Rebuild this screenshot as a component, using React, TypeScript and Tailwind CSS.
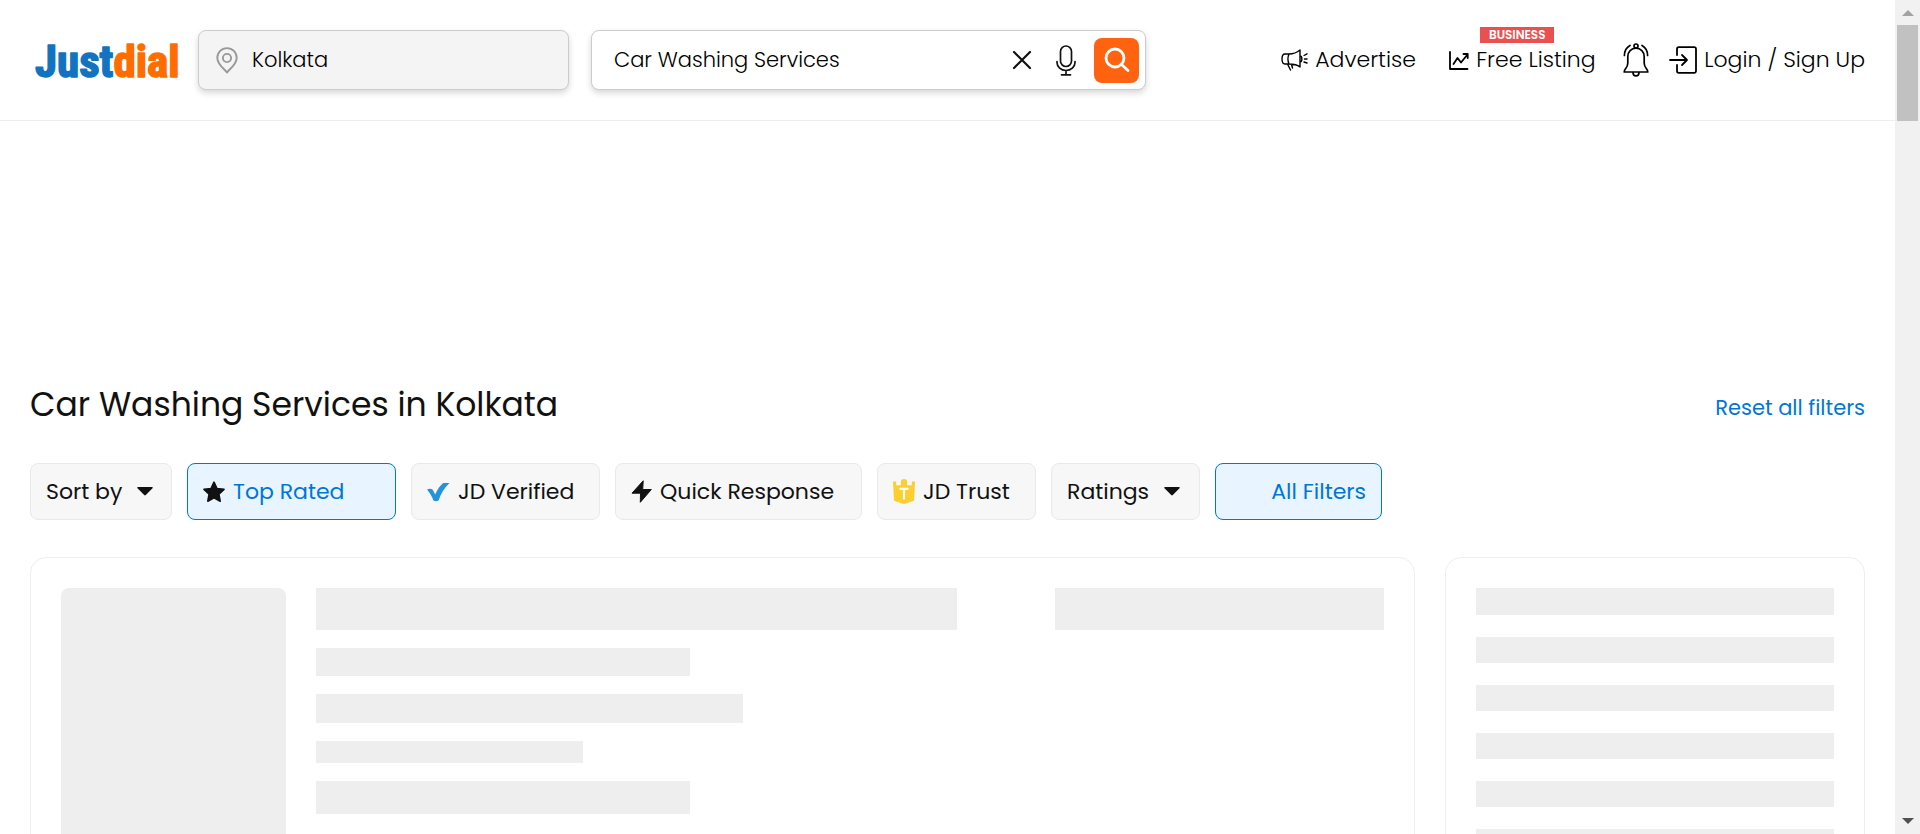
import React from "react";

const stroke = {
  fill: "none",
  stroke: "currentColor",
  strokeLinecap: "round" as const,
  strokeLinejoin: "round" as const,
};

function Logo() {
  return (
    <svg width="152" height="60" viewBox="0 0 152 60" className="font-['Roboto_Condensed','Liberation_Sans_Narrow',sans-serif] text-[45px] font-bold" strokeWidth="1.500" strokeLinejoin="round" aria-hidden="true">
      <text x="5" y="47" fill="#1274c0" stroke="#1274c0">
        Just<tspan fill="#ff6c00" stroke="#ff6c00">dial</tspan>
      </text>
    </svg>
  );
}

function PinIcon() {
  return (
    <svg width="22" height="27" viewBox="0 0 22 27" {...stroke} strokeWidth="1.900" className="shrink-0 text-[#999]" aria-hidden="true">
      <path d="M11 25.500C9.500 22.800 1.300 18 1.300 10.800a9.700 9.700 0 0 1 19.400 0C20.700 18 12.500 22.800 11 25.500Z" />
      <circle cx="11" cy="11" r="4.100" />
    </svg>
  );
}

function CrossIcon() {
  return (
    <svg width="20" height="20" viewBox="0 0 20 20" {...stroke} strokeWidth="2.200" aria-hidden="true">
      <path d="M2 2 18 18M18 2 2 18" />
    </svg>
  );
}

function MicIcon() {
  return (
    <svg width="20" height="31" viewBox="0 0 20 31" {...stroke} strokeWidth="1.700" aria-hidden="true">
      <rect x="4.500" y="1" width="11" height="20.500" rx="5.500" />
      <path d="M1 16.500v1a9 8 0 0 0 18 0v-1M10 25.500v4M5.500 29.800h9" />
    </svg>
  );
}

function SearchIcon() {
  return (
    <svg width="26" height="26" viewBox="0 0 26 26" {...stroke} strokeWidth="2.800" aria-hidden="true">
      <circle cx="11" cy="11" r="9" />
      <path d="m17.500 17.500 6.500 6" />
    </svg>
  );
}

function MegaphoneIcon() {
  return (
    <svg width="27" height="22" viewBox="0 0 27 22" {...stroke} strokeWidth="1.400" aria-hidden="true">
      <path d="M8 5H4C0 5 0 15 4 15h4M8 5c5 0 8-1.500 11-4v17c-3-2.500-6-3-11-3M8 5c-1.300 3-1.300 7 0 10M6.500 15l3 6M10.500 15.200l1 3.800M19 7c2.500 0 2.500 6 0 6" />
      <path d="m23 6.500 3-1.700M23.500 10H26M23 13l3 1" />
    </svg>
  );
}

function ChartIcon() {
  return (
    <svg width="20" height="19" viewBox="0 0 20 19" {...stroke} strokeWidth="1.800" aria-hidden="true">
      <path d="M1 1v17h17.500" />
      <path d="m4.500 13 4-6 3.500 4.500L18.500 3.500M14.500 3h4.200v4" />
    </svg>
  );
}

function BellIcon() {
  return (
    <svg width="26" height="34" viewBox="0 0 26 34" {...stroke} strokeWidth="1.700" aria-hidden="true">
      <path d="M1.200 29h23.600c0-3.200-3.600-4-3.600-9v-6.500c0-4.800-3.500-8.300-8.200-8.300s-8.200 3.500-8.200 8.300V20c0 5-3.600 5.800-3.600 9Z" />
      <circle cx="13" cy="3" r="2" />
      <path d="M10 29.500c0 4.500 6 4.500 6 0M1.400 12.500c0-4.500 2-8 5.600-10M24.600 12.500c0-4.500-2-8-5.600-10" />
    </svg>
  );
}

function LoginIcon() {
  return (
    <svg width="28" height="28" viewBox="0 0 28 28" {...stroke} strokeWidth="1.800" aria-hidden="true">
      <path d="M8 9V3a1.800 1.800 0 0 1 1.800-1.800h15.400A1.800 1.800 0 0 1 27 3v22a1.800 1.800 0 0 1-1.800 1.800H9.800A1.800 1.800 0 0 1 8 25v-6" />
      <path d="M1 14h17M13 9l5 5-5 5" />
    </svg>
  );
}

function StarIcon() {
  return (
    <svg width="22" height="22" viewBox="0 0 22 22" fill="#111" stroke="#111" strokeWidth="1.600" strokeLinejoin="round" aria-hidden="true">
      <path d="m11 1.200 3 6.300 7 .9-5.100 4.800 1.300 7L11 16.800l-6.200 3.400 1.300-7L1 8.400l7-.9Z" />
    </svg>
  );
}

function TickIcon() {
  return (
    <svg width="23" height="20" viewBox="1 0 23 20" fill="#2393e0" aria-hidden="true">
      <path d="M1 7.500c2.200-.9 4.300-.9 5.700.2l2.500 4.800C11.300 7.500 14 3.500 17.200 1H23.500C18 6 14.700 12 12.700 18.300c-1.500 1.200-3.600 1.200-5.200.2C5.700 14 3.700 10.600 1 7.500Z" />
    </svg>
  );
}

function BoltIcon() {
  return (
    <svg width="21" height="23" viewBox="0 0 21 23" fill="#111" stroke="#111" strokeLinejoin="round" aria-hidden="true">
      <path d="M12.200.8 1 13.200h8.500L9.300 22.300 20.300 9.500h-8.600Z" />
    </svg>
  );
}

function TrustIcon() {
  return (
    <svg width="22" height="25" viewBox="0 0 22 25" aria-hidden="true">
      <path fill="#fdce2f" d="M0 2.500h3.200v3.800h4.700V2.200C7.900-.7 14.100-.7 14.100 2.200v4.100h4.700V2.500H22l-1 19.300L11 25 1 21.800Z" />
      <path fill="none" stroke="#fff" strokeWidth="2.200" strokeLinecap="round" d="M7.300 9.800h7.400M11 9.800v9.700" />
    </svg>
  );
}

function Caret() {
  return (
    <svg width="16" height="9" viewBox="0 0 16 9" fill="#111" aria-hidden="true">
      <path d="M1 0h14c.8 0 1 .8.500 1.300L8.800 8.100a1.200 1.200 0 0 1-1.600 0L.5 1.300C0 .8.200 0 1 0Z" />
    </svg>
  );
}

function Chip({ className, active, children }: { className: string; active?: boolean; children: React.ReactNode }) {
  const tone = active ? "border-[#0076d7] bg-[#e8f4ff] text-[#0076d7]" : "border-[#e9e9e9] bg-[#f7f7f7] text-[#111]";
  return (
    <button type="button" aria-pressed={active} className={`flex h-[57px] items-center whitespace-nowrap rounded-lg border px-[15px] text-[22px] ${tone} ${className}`}>
      {children}
    </button>
  );
}

function Header() {
  return (
    <header className="flex items-center border-b border-[#eee] px-[30px] py-[30px]">
      <a href="#" aria-label="Justdial">
        <Logo />
      </a>
      <label className="ml-4 flex h-[60px] w-[371px] items-center gap-[14px] rounded-lg border border-[#ccc] bg-[#f4f4f4] px-[17px] shadow-[0_3px_6px_rgba(0,0,0,0.16)]">
        <PinIcon />
        <input aria-label="Location" defaultValue="Kolkata" className="min-w-0 flex-1 bg-transparent text-[21px] font-light text-black outline-none" />
      </label>
      <form className="ml-[22px] flex h-[60px] w-[555px] items-center rounded-lg border border-[#ccc] bg-white pl-[22px] pr-[6px] shadow-[0_3px_6px_rgba(0,0,0,0.16)]">
        <input aria-label="Search" defaultValue="Car Washing Services" className="min-w-0 flex-1 bg-transparent text-[21px] font-light text-black outline-none" />
        <button type="button" aria-label="Clear search"><CrossIcon /></button>
        <button type="button" aria-label="Voice search" className="ml-6"><MicIcon /></button>
        <button type="submit" aria-label="Search now" className="ml-[18px] flex h-[45px] w-[45px] items-center justify-center rounded-lg bg-[#ff6310] text-white">
          <SearchIcon />
        </button>
      </form>
      <nav className="ml-auto flex items-center whitespace-nowrap text-[22px] font-light leading-8 text-black">
        <a href="#" className="flex w-[168px] items-center gap-[7px]"><MegaphoneIcon />Advertise</a>
        <a href="#" className="relative flex w-[174px] items-center gap-[7px]">
          <ChartIcon />Free Listing
          <span className="absolute -top-[17px] left-[31px] flex h-4 w-[74px] items-center justify-center bg-[#eb5050] text-[12px] font-semibold text-white">BUSINESS</span>
        </a>
        <button type="button" aria-label="Notifications" className="mr-5"><BellIcon /></button>
        <a href="#" className="flex items-center gap-[7px]"><LoginIcon />Login / Sign Up</a>
      </nav>
    </header>
  );
}

const resultBars = ["h-7 w-[35%]", "h-[29px] w-[40%]", "h-[22px] w-1/4", "h-[33px] w-[35%]"];

export default function App() {
  return (
    <div className="flex h-screen overflow-hidden bg-white font-['Poppins','Inter',sans-serif] text-[#111]">
      <div className="min-w-0 flex-1">
        <Header />
        <main className="px-[30px] pt-[259px]">
          <div className="flex items-end justify-between">
            <h1 className="text-[33px] leading-[50px]">Car Washing Services in Kolkata</h1>
            <a href="#" className="text-[21px] leading-[44px] text-[#0076d7]">Reset all filters</a>
          </div>
          <div className="mt-[33px] flex gap-[15px]">
            <Chip className="w-[142px] gap-[15px]">Sort by <Caret /></Chip>
            <Chip active className="w-[209px] gap-2"><StarIcon />Top Rated</Chip>
            <Chip className="w-[189px] gap-2"><TickIcon />JD Verified</Chip>
            <Chip className="w-[247px] gap-2"><BoltIcon />Quick Response</Chip>
            <Chip className="w-[159px] gap-2"><TrustIcon />JD Trust</Chip>
            <Chip className="w-[149px] gap-[15px]">Ratings <Caret /></Chip>
            <Chip active className="w-[167px] justify-end">All Filters</Chip>
          </div>
          <div className="mt-[37px] flex gap-[30px]">
            <section aria-busy="true" className="flex flex-1 gap-[30px] rounded-2xl border border-[#eee] p-[30px]">
              <div className="h-[300px] w-[225px] shrink-0 rounded-lg bg-[#eee]" />
              <div className="flex flex-1 flex-col gap-[18px]">
                <div className="flex h-[42px] justify-between">
                  <div className="w-3/5 bg-[#eee]" />
                  <div className="w-4/13 bg-[#eee]" />
                </div>
                {resultBars.map((bar, i) => (
                  <div key={i} className={`bg-[#eee] ${bar}`} />
                ))}
              </div>
            </section>
            <aside aria-busy="true" className="flex w-[420px] flex-col gap-[22px] rounded-2xl border border-[#eee] p-[30px]">
              {Array.from({ length: 7 }, (_, i) => (
                <div key={i} className="h-[26px] bg-[#eee] first:h-[27px]" />
              ))}
            </aside>
          </div>
        </main>
      </div>
      <div aria-hidden="true" className="flex w-[25px] flex-col items-center justify-between bg-[#f1f1f1] pb-[10px] pt-[10px]">
        <div className="flex flex-col items-center gap-[9px]">
          <svg width="12" height="6" viewBox="0 0 12 6" fill="#a3a3a3"><path d="M6 0 12 6H0Z" /></svg>
          <div className="h-24 w-[21px] bg-[#c1c1c1]" />
        </div>
        <svg width="12" height="6" viewBox="0 0 12 6" fill="#505050"><path d="M0 0h12L6 6Z" /></svg>
      </div>
    </div>
  );
}
